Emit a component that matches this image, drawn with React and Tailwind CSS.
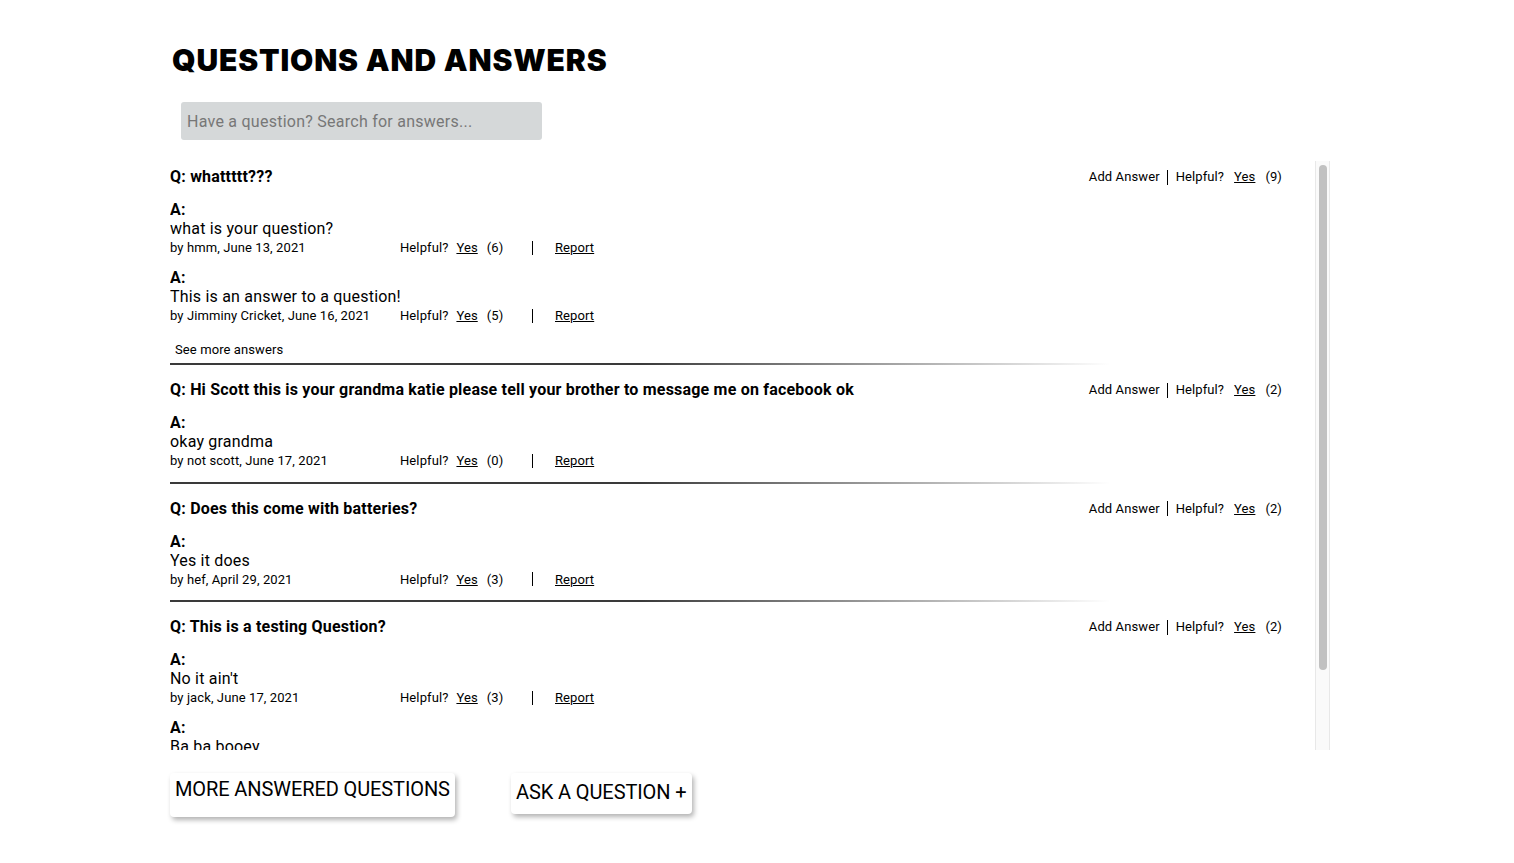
import React from "react";

const questions = [
  {
    q: "whattttt???",
    helpful: 9,
    answers: [
      { body: "what is your question?", by: "by hmm, June 13, 2021", helpful: 6 },
      { body: "This is an answer to a question!", by: "by Jimminy Cricket, June 16, 2021", helpful: 5 },
    ],
    more: true,
  },
  {
    q: "Hi Scott this is your grandma katie please tell your brother to message me on facebook ok",
    helpful: 2,
    answers: [{ body: "okay grandma", by: "by not scott, June 17, 2021", helpful: 0 }],
  },
  {
    q: "Does this come with batteries?",
    helpful: 2,
    answers: [{ body: "Yes it does", by: "by hef, April 29, 2021", helpful: 3 }],
  },
  {
    q: "This is a testing Question?",
    helpful: 2,
    answers: [
      { body: "No it ain't", by: "by jack, June 17, 2021", helpful: 3 },
      { body: "Ba ba booey", by: "by scott, June 18, 2021", helpful: 1 },
    ],
    more: true,
  },
];

function Divider() {
  return (
    <div className="h-[2px] w-[940px] bg-[linear-gradient(to_right,#3a3a3a_0%,#3a3a3a_50%,rgba(58,58,58,0)_100%)]" />
  );
}

function Answer({ a }) {
  return (
    <div>
      <div className="h-[19px] leading-[19px] text-[16px] font-bold tracking-[0.2px]">A:</div>
      <div className="h-[19px] leading-[19px] text-[16px] tracking-[0.2px]">{a.body}</div>
      <div className="h-[19px] leading-[19px] text-[13px] tracking-[0.1px] flex items-center">
        <span className="w-[230px] shrink-0">{a.by}</span>
        <span className="w-[132px] shrink-0 flex items-center">
          <span>Helpful?</span>
          <span className="ml-[8px] underline">Yes</span>
          <span className="ml-[9px]">({a.helpful})</span>
        </span>
        <span className="w-px h-[14px] bg-black" />
        <span className="ml-[22px] underline">Report</span>
      </div>
    </div>
  );
}

function Question({ item, first }) {
  return (
    <div>
      <div className={first ? "pt-[4px]" : "pt-[13px]"}>
        <div className="h-[24px] flex items-center justify-between pr-[33px]">
          <span className="text-[16px] font-bold tracking-[0.2px]">Q: {item.q}</span>
          <span className="flex items-center text-[13px] tracking-[0.1px]">
            <span>Add Answer</span>
            <span className="w-px h-[15px] bg-black ml-[7px] mr-[8px]" />
            <span>Helpful?</span>
            <span className="ml-[10px] underline">Yes</span>
            <span className="ml-[10px]">({item.helpful})</span>
          </span>
        </div>
        <div className="mt-[11px] flex flex-col gap-[11px]">
          {item.answers.map((a, i) => (
            <Answer key={i} a={a} />
          ))}
        </div>
        {item.more ? (
          <div className="mt-[17px] mb-[5px] h-[16px] leading-[16px] text-[13px] tracking-[0.1px] pl-[5px]">
            See more answers
          </div>
        ) : (
          <div className="h-[11.5px]" />
        )}
      </div>
      <Divider />
    </div>
  );
}

export default function App() {
  return (
    <div
      className="min-h-[863px] bg-white text-black pl-[170px]"
      style={{ fontFamily: "Roboto, 'Liberation Sans', sans-serif" }}
    >
      <h1
        className="pt-[42px] h-[78px] ml-[2px] leading-[36px] text-[30px] font-black tracking-[0.85px]"
        style={{ fontFamily: "Inter, 'Liberation Sans', sans-serif" }}
      >
        QUESTIONS AND ANSWERS
      </h1>
      <div className="mt-[24px] ml-[11px] w-[361px] h-[38px] rounded-[3px] bg-[#d5d8d9] flex items-center pl-[6px] pt-[2px] text-[16px] tracking-[0.25px] text-[#777]">
        Have a question? Search for answers...
      </div>
      <div className="mt-[21px] w-[1160px] h-[589px] flex">
        <div className="w-[1145px] h-full overflow-hidden">
          {questions.map((q, i) => (
            <Question key={i} item={q} first={i === 0} />
          ))}
        </div>
        <div className="w-[15px] h-full bg-[#fafafa] border-x border-[#e8e8e8] pt-[4px] flex justify-center">
          <div className="h-[505px] w-[8px] rounded-full bg-[#c1c1c1]" />
        </div>
      </div>
      <div className="mt-[23px] flex items-start gap-[56px]">
        <div className="w-[285px] h-[44px] rounded-[4px] shadow-[2px_3px_5px_rgba(0,0,0,0.3)] pl-[5px] pt-[3px] text-[20px] leading-[26px] tracking-[-0.1px]">
          MORE ANSWERED QUESTIONS
        </div>
        <div className="w-[181px] h-[41px] rounded-[4px] shadow-[2px_3px_5px_rgba(0,0,0,0.3)] pl-[5px] pb-[3px] flex items-center text-[20px] leading-[26px] tracking-[-0.1px]">
          ASK A QUESTION +
        </div>
      </div>
    </div>
  );
}
